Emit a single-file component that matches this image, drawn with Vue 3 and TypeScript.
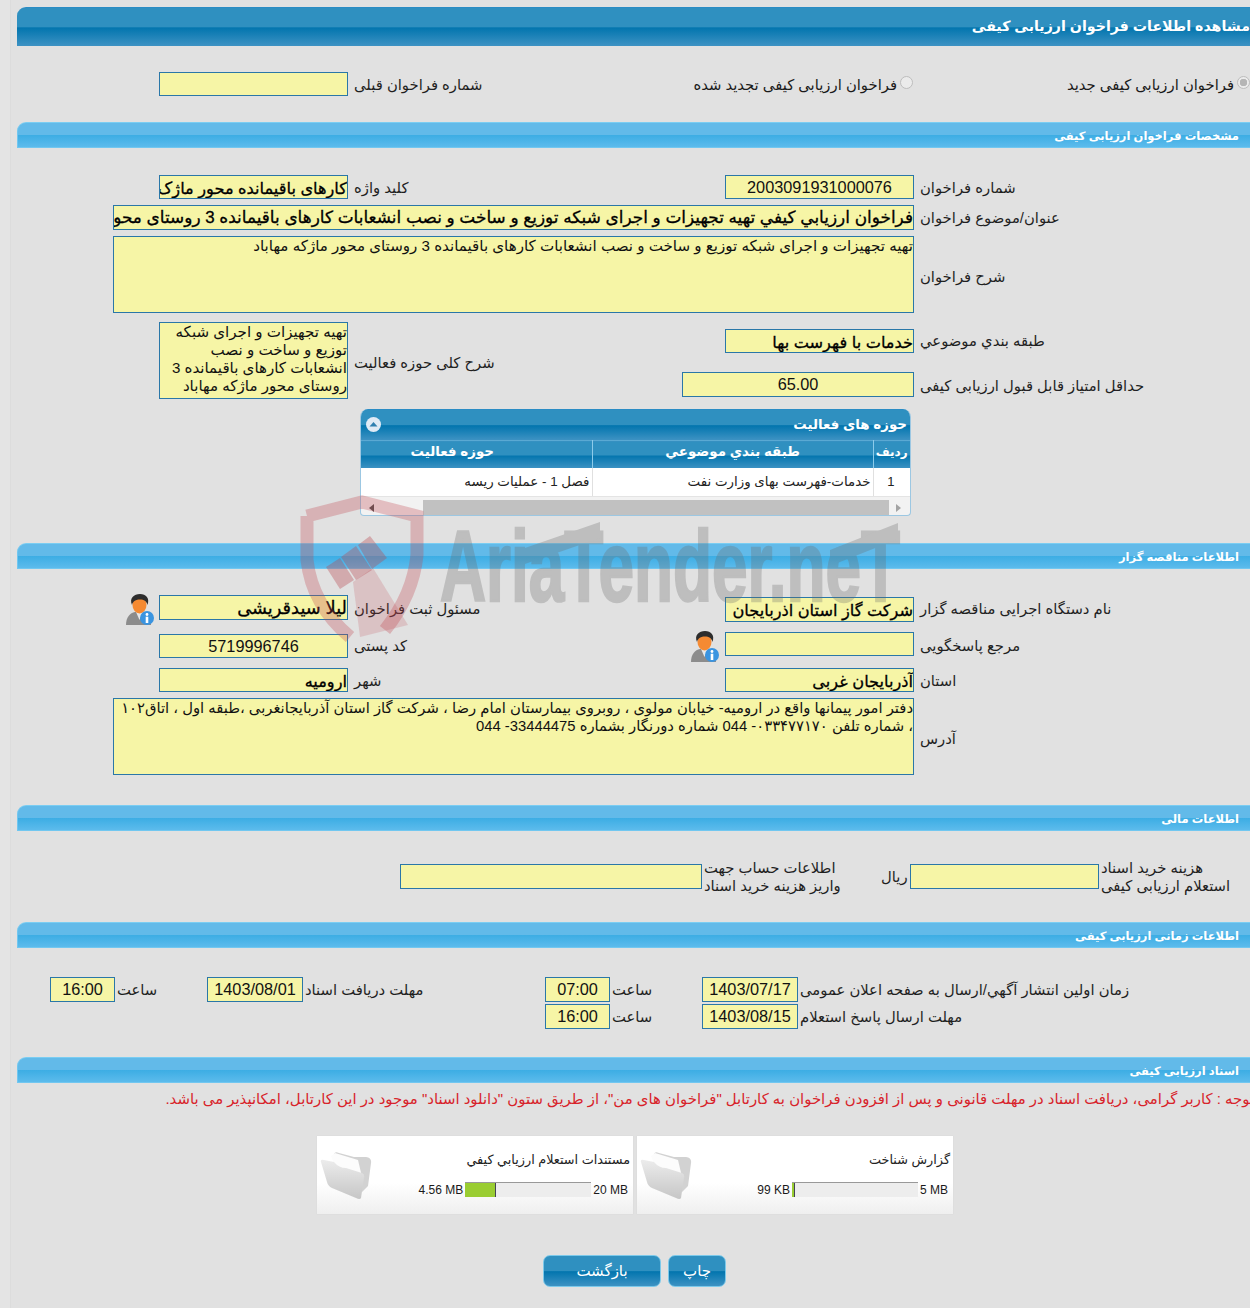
<script setup lang="ts">
interface Doc { title: string; used: string; max: string; pct: number }
const docs: Doc[] = [
  { title: 'مستندات استعلام ارزیابي کیفي', used: '4.56 MB', max: '20 MB', pct: 24 },
  { title: 'گزارش شناخت', used: '99 KB', max: '5 MB', pct: 2.5 },
]
const subject = 'فراخوان ارزيابي كيفي تهیه تجهیزات و اجرای شبکه توزیع و ساخت و نصب انشعابات کارهای باقیمانده 3 روستای محور ماژکه مهاباد'
const desc = 'تهیه تجهیزات و اجرای شبکه توزیع و ساخت و نصب انشعابات کارهای باقیمانده 3 روستای محور ماژکه مهاباد'
</script>

<template>
  <div class="viewport">
    <div class="page">
      <div class="bar bar-dark top-bar">مشاهده اطلاعات فراخوان ارزیابی کیفی</div>

      <div class="radio-row">
        <div class="field f-189 c1"></div>
        <div class="label c2">شماره فراخوان قبلی</div>
        <div class="radio-opt opt-a"><span class="radio"></span><span>فراخوان ارزیابی کیفی تجدید شده</span></div>
        <div class="radio-opt opt-b"><span class="radio on"></span><span>فراخوان ارزیابی کیفی جدید</span></div>
      </div>

      <div class="bar bar-light mt-26 h-26">مشخصات فراخوان ارزیابی کیفی</div>

      <div class="row h-24 mt-27">
        <div class="field f-189 c1 bold">کارهای باقیمانده محور ماژک</div>
        <div class="label c2">کلید واژه</div>
        <div class="field f-189 c3 num center">2003091931000076</div>
        <div class="label c4">شماره فراخوان</div>
      </div>
      <div class="row h-25 mt-6">
        <div class="field wide bold subject">{{ subject }}</div>
        <div class="label c4">عنوان/موضوع فراخوان</div>
      </div>
      <div class="row h-77 mt-6">
        <div class="field wide area">{{ desc }}</div>
        <div class="label c4">شرح فراخوان</div>
      </div>

      <div class="row split mt-9">
        <div class="field f-189 c1 span2 area">تهیه تجهیزات و اجرای شبکه<br />توزیع و ساخت و نصب<br />انشعابات کارهای باقیمانده 3<br />روستای محور ماژکه مهاباد</div>
        <div class="label c2 span2 drop">شرح کلی حوزه فعالیت</div>
        <div class="field f-189 c3 bold end">خدمات با فهرست بها</div>
        <div class="label c4 drop-more">طبقه بندي موضوعي</div>
        <div class="field f-232 c23 r2 num center start">65.00</div>
        <div class="label c4 r2">حداقل امتیاز قابل قبول ارزیابی کیفی</div>
      </div>

      <section class="panel">
        <div class="panel-head bar-dark">
          <span>حوزه های فعالیت</span>
          <svg class="collapse" width="15" height="15" viewBox="0 0 15 15">
            <circle cx="7.5" cy="7.5" r="7.5" fill="#dfeaf5" />
            <path d="M3.5 9.5 L7.5 5 L11.5 9.5 Z" fill="#2f7fb0" />
          </svg>
        </div>
        <table class="grid">
          <thead>
            <tr>
              <th class="w-38 small">ردیف</th>
              <th class="w-282">طبقه بندي موضوعي</th>
              <th class="scrolled">حوزه فعالیت</th>
            </tr>
          </thead>
          <tbody>
            <tr>
              <td class="tc">1</td>
              <td>خدمات-فهرست بهای وزارت نفت</td>
              <td>فصل 1 - عملیات ریسه</td>
            </tr>
          </tbody>
        </table>
        <div class="scroller">
          <span class="arrow arrow-r"></span>
          <span class="thumb"></span>
          <span class="arrow arrow-l"></span>
        </div>
      </section>

      <div class="bar bar-light mt-27 h-26">اطلاعات مناقصه گزار</div>

      <div class="row h-27 mt-26">
        <div class="c1 person start">
          <svg class="user" width="30" height="32" viewBox="0 0 30 32">
            <path d="M1 31c0-8 4-12 9-13h7c5 1 9 5 9 13z" fill="#8c8c8c" />
            <path d="M11 18l3.5 8 3.5-8z" fill="#e8e8e8" />
            <ellipse cx="14.5" cy="11" rx="7" ry="8.5" fill="#f58a32" />
            <path d="M7 11C4 4 9 0 15 0s10 4 7.5 11c-1-4-3.5-5.5-7.5-5.5S8 7 7 11z" fill="#2d2d2d" />
            <circle cx="22" cy="24" r="7" fill="#3a94e0" />
            <circle cx="22" cy="20.5" r="1.4" fill="#fff" />
            <rect x="20.7" y="22.7" width="2.6" height="6.3" fill="#fff" />
          </svg>
          <div class="field f-189 h-25 bold name">لیلا سیدقریشی</div>
        </div>
        <div class="label c2">مسئول ثبت فراخوان</div>
        <div class="field f-189 h-25 c3 bold end">شرکت گاز استان اذربایجان</div>
        <div class="label c4">نام دستگاه اجرایی مناقصه گزار</div>
      </div>
      <div class="row h-26 mt-10">
        <div class="field f-189 h-24 c1 num center end">5719996746</div>
        <div class="label c2 inline-user">
          <span>کد پستی</span>
          <svg class="user near" width="30" height="32" viewBox="0 0 30 32">
            <path d="M1 31c0-8 4-12 9-13h7c5 1 9 5 9 13z" fill="#8c8c8c" />
            <path d="M11 18l3.5 8 3.5-8z" fill="#e8e8e8" />
            <ellipse cx="14.5" cy="11" rx="7" ry="8.5" fill="#f58a32" />
            <path d="M7 11C4 4 9 0 15 0s10 4 7.5 11c-1-4-3.5-5.5-7.5-5.5S8 7 7 11z" fill="#2d2d2d" />
            <circle cx="22" cy="24" r="7" fill="#3a94e0" />
            <circle cx="22" cy="20.5" r="1.4" fill="#fff" />
            <rect x="20.7" y="22.7" width="2.6" height="6.3" fill="#fff" />
          </svg>
        </div>
        <div class="field f-189 h-24 c3 start"></div>
        <div class="label c4">مرجع پاسخگویی</div>
      </div>
      <div class="row h-24 mt-10">
        <div class="field f-189 c1 bold">ارومیه</div>
        <div class="label c2">شهر</div>
        <div class="field f-189 c3 bold">آذربایجان غربی</div>
        <div class="label c4">استان</div>
      </div>
      <div class="row h-77 mt-6">
        <div class="field wide area addr">دفتر امور پیمانها واقع در ارومیه- خیابان مولوی ، روبروی بیمارستان امام رضا ، شرکت گاز استان آذربایجانغربی ،طبقه اول ، اتاق۱۰۲<br />، شماره تلفن ۰۳۳۴۷۷۱۷۰- 044 شماره دورنگار بشماره 33444475- 044</div>
        <div class="label c4">آدرس</div>
      </div>

      <div class="bar bar-light mt-30 h-26">اطلاعات مالی</div>

      <div class="money">
        <div class="field"></div>
        <div class="label pad">اطلاعات حساب جهت<br />واریز هزینه خرید اسناد</div>
        <div class="label">ریال</div>
        <div class="field"></div>
        <div class="label pad">هزینه خرید اسناد<br />استعلام ارزیابی کیفی</div>
      </div>

      <div class="bar bar-light mt-33 h-26">اطلاعات زمانی ارزیابی کیفی</div>

      <div class="times mt-29">
        <div class="field num center">16:00</div>
        <div class="label pad">ساعت</div>
        <div class="field num center">1403/08/01</div>
        <div class="label pad">مهلت دریافت اسناد</div>
        <div class="field num center">07:00</div>
        <div class="label pad">ساعت</div>
        <div class="field num center">1403/07/17</div>
        <div class="label pad">زمان اولین انتشار آگهي/ارسال به صفحه اعلان عمومی</div>
      </div>
      <div class="times mt-2">
        <div class="blank"></div>
        <div class="blank"></div>
        <div class="blank"></div>
        <div class="blank"></div>
        <div class="field num center">16:00</div>
        <div class="label pad">ساعت</div>
        <div class="field num center">1403/08/15</div>
        <div class="label pad">مهلت ارسال پاسخ استعلام</div>
      </div>

      <div class="bar bar-light mt-28 h-26">اسناد ارزیابی کیفی</div>

      <p class="notice">توجه : کاربر گرامی، دریافت اسناد در مهلت قانونی و پس از افزودن فراخوان به کارتابل "فراخوان های من"، از طریق ستون "دانلود اسناد" موجود در این کارتابل، امکانپذیر می باشد.</p>

      <div class="cards">
        <article v-for="d in docs" :key="d.title" class="card">
          <svg class="folder" width="56" height="52" viewBox="0 0 56 52">
            <defs>
              <linearGradient id="fold" x1="0" y1="0" x2="0" y2="1">
                <stop offset="0" stop-color="#ececec" />
                <stop offset="1" stop-color="#c6c6c6" />
              </linearGradient>
            </defs>
            <path d="M16 6 Q17 3 21 5 L36 9 L48 9 Q54 10 53 15 L50 38 L44 44 L16 30 Z" fill="#d2d2d2" />
            <path d="M13 8 L17 5 L40 12 L45 33 L22 30 Z" fill="#fcfcfc" />
            <path d="M3 14 Q2 11 6 12 L16 14 Q21 20 28 20 L44 25 Q47 26 46 30 L43 50 Q42 52 38 50 L14 40 Q10 38 9 34 Z" fill="url(#fold)" />
          </svg>
          <div class="card-body">
            <div class="card-title">{{ d.title }}</div>
            <div class="meter-row">
              <span>{{ d.used }}</span>
              <span class="meter"><span class="meter-fill" :style="{ width: d.pct + '%' }"></span></span>
              <span>{{ d.max }}</span>
            </div>
          </div>
        </article>
      </div>

      <div class="actions">
        <button class="btn bar-dark back" type="button">بازگشت</button>
        <button class="btn bar-dark print" type="button">چاپ</button>
      </div>
    </div>

    <svg class="watermark" width="620" height="150" viewBox="0 0 620 150">
      <path d="M7 21 L62 7 L117 21 L117 60 Q113 100 85 135 M7 21 L7 65 Q12 110 50 142" fill="none" stroke="#c0474f" stroke-opacity="0.3" stroke-width="13" />
      <g fill="#b8484f" fill-opacity="0.36">
        <path d="M26 72 L40 63 L54 85 L40 94 Z" />
        <path d="M41 62 L56 51 L72 75 L56 85 Z" />
        <path d="M58 50 L70 41 L87 63 L72 74 Z" />
      </g>
      <path d="M53 87 L73 73 L108 130 L60 142 Z" fill="#c0474f" fill-opacity="0.2" />
      <g opacity="0.29" fill="#6a6a6a">
        <text x="140" y="106" class="wm-text" textLength="460" lengthAdjust="spacingAndGlyphs">AriaTender.neT</text>
        <path d="M222 54 L300 27 L300 43 L222 70 Z M530 55 L598 28 L598 44 L530 71 Z" />
      </g>
    </svg>
  </div>
</template>

<style scoped>
.viewport {
  position: relative;
  width: 1250px;
  height: 1308px;
  overflow: hidden;
  background: linear-gradient(to right, #e4e4e4 10px, #dcdcdc 10px, #dcdcdc 11px, #e1e1e1 11px);
  font-family: "Liberation Sans", "DejaVu Sans", sans-serif;
  font-size: 13px;
  color: #1a1a1a;
}
.page {
  width: 1262px;
  padding-top: 7px;
  direction: ltr;
}
.bar {
  margin-left: 17px;
  box-sizing: border-box;
  direction: rtl;
  color: #fff;
  font-weight: 700;
  border-top-left-radius: 9px;
  border-top-right-radius: 9px;
  white-space: nowrap;
  padding-right: 23px;
  display: flex;
  align-items: center;
}
.bar-dark {
  background: linear-gradient(#2f90c0 0, #2f90c0 50%, #0275ae 52%, #3d92c3 100%);
  border-top: 1px solid #2a8cc4;
}
.bar-light {
  background: linear-gradient(#62bae9 0, #62bae9 48%, #3cade4 50%, #5cbbec 100%);
  border-top: 1px solid #7acdf2;
  border-bottom: 1px solid #71c7f0;
  border-left: 1px solid #71c7f0;
  font-size: 11.5px;
  padding-top: 1px;
}
.top-bar {
  height: 39px;
  padding-right: 12px;
  padding-bottom: 2px;
  font-size: 14.2px;
}
.mt-2 { margin-top: 2px; }
.mt-6 { margin-top: 6px; }
.mt-9 { margin-top: 9px; }
.mt-10 { margin-top: 10px; }
.mt-26 { margin-top: 26px; }
.mt-27 { margin-top: 27px; }
.mt-28 { margin-top: 28px; }
.mt-29 { margin-top: 29px; }
.mt-30 { margin-top: 30px; }
.mt-33 { margin-top: 33px; }
.h-24 { height: 24px; }
.h-25 { height: 25px; }
.h-26 { height: 26px; }
.h-27 { height: 27px; }
.h-77 { height: 77px; }

.row,
.radio-row {
  display: grid;
  grid-template-columns: 348px 360px 194px 330px;
  column-gap: 6px;
}
.radio-row {
  margin-top: 26px;
  height: 24px;
  grid-template-columns: 348px 328px 225px 331px;
}
.c1 { grid-column: 1; justify-self: end; }
.c2 { grid-column: 2; }
.c3 { grid-column: 3; justify-self: end; }
.c23 { grid-column: 2 / 4; justify-self: end; }
.c4 { grid-column: 4; }
.wide { grid-column: 1 / 4; width: 801px; justify-self: end; }
.r2 { grid-row: 2; }
.span2 { grid-row: 1 / 3; }
.split {
  grid-template-rows: 31px 27px;
  row-gap: 19px;
}
.start { align-self: start; }
.end { align-self: end; }

.field {
  box-sizing: border-box;
  height: 100%;
  background: #f6f5a6;
  border: 1px solid #2a77a8;
  direction: rtl;
  text-align: right;
  font-size: 15px;
  line-height: 22px;
  white-space: nowrap;
  overflow: hidden;
  color: #111;
}
.f-189 { width: 189px; }
.f-232 { width: 232px; height: 25px; }
.h-24.field { height: 24px; }
.h-25.field { height: 25px; }
.split .end.field { height: 24px; }
.split .start.field { height: 25px; }
.bold { font-size: 16.2px; line-height: 24px; font-weight: 400; color: #000; -webkit-text-stroke: 0.3px #000; }
.subject { font-size: 16.9px; }
.name { font-size: 17.8px; }
.num { font-size: 16.3px; direction: ltr; }
.center { text-align: center; }
.area {
  white-space: normal;
  line-height: 18px;
  font-size: 15.1px;
}
.addr { font-size: 14.8px; }

.label {
  direction: rtl;
  text-align: left;
  align-self: center;
  box-sizing: border-box;
  padding-top: 1px;
  font-size: 14.8px;
  line-height: 18px;
  white-space: nowrap;
  color: #1f1f1f;
}
.pad { padding-left: 2px; }
.h-77 .label,
.label.drop { padding-top: 4px; }
.label.drop-more { padding-top: 7px; }

.radio-opt {
  display: flex;
  direction: rtl;
  align-items: center;
  gap: 3px;
  white-space: nowrap;
  font-size: 14.8px;
}
.radio {
  width: 13px;
  height: 13px;
  flex: none;
  box-sizing: border-box;
  margin-top: -4px;
  border-radius: 50%;
  border: 1px solid #bdbdbd;
  background: #ebebeb;
}
.radio.on {
  background: radial-gradient(circle, #b5b5b5 0 3.5px, #ebebeb 4px);
}
.person {
  display: flex;
  align-items: flex-start;
  gap: 3px;
  height: 25px;
}
.inline-user {
  display: flex;
  justify-content: space-between;
  align-items: center;
  direction: ltr;
  height: 26px;
}
.inline-user > span { direction: rtl; }
.user {
  flex: none;
  margin-top: -1px;
  margin-right: 1px;
  filter: blur(0.4px);
}
.user.near {
  margin-right: -6px;
  margin-top: 3px;
}

.panel {
  box-sizing: border-box;
  margin: 10px 0 0 360px;
  width: 551px;
  height: 107px;
  background: #f2f2f2;
  border: 1px solid #9cc7e2;
  border-top: none;
  border-radius: 8px 8px 4px 4px;
  overflow: hidden;
  direction: rtl;
}
.panel-head {
  height: 28px;
  display: flex;
  justify-content: space-between;
  align-items: center;
  padding: 0 3px 2px 5px;
  color: #fff;
  font-weight: 700;
  font-size: 13.4px;
}
.grid {
  width: 100%;
  border-collapse: collapse;
  table-layout: fixed;
}
.grid th {
  height: 27px;
  padding: 0 0 5px;
  box-sizing: border-box;
  font-size: 13.4px;
  font-weight: 700;
  color: #fff;
  text-align: center;
  background: linear-gradient(#2f90c0 0, #2f90c0 50%, #0275ae 52%, #3d92c3 100%);
  border-left: 1px solid #8ccbea;
  border-top: 1px solid #5aa9d3;
}
.grid th:last-child,
.grid td:last-child { border-left: none; }
.grid th.small { font-size: 12px; }
.grid th.scrolled { padding-right: 48px; }
.w-38 { width: 37px; }
.w-282 { width: 281px; }
.grid td {
  height: 29px;
  box-sizing: border-box;
  padding: 0 2px 0 0;
  background: #fff;
  font-size: 13.4px;
  border-left: 1px solid #e0e0e0;
  border-bottom: 1px solid #e4e4e4;
  color: #222;
}
.grid td.tc { text-align: center; font-size: 13px; }
.scroller {
  display: flex;
  direction: ltr;
  align-items: center;
  height: 22px;
}
.thumb {
  width: 466px;
  height: 17px;
  margin: 0 7px 0 49px;
  background: #c1c1c1;
}
.arrow {
  width: 0;
  height: 0;
  border-top: 4px solid transparent;
  border-bottom: 4px solid transparent;
}
.arrow-r {
  margin-left: 8px;
  border-right: 5px solid #505050;
}
.arrow-l {
  border-left: 5px solid #a3a3a3;
}

.money {
  display: grid;
  grid-template-columns: 302px 179px 29px 189px 1fr;
  grid-template-rows: 25px;
  margin: 33px 0 0 400px;
  height: 25px;
}

.times {
  display: grid;
  grid-template-columns: 65px 92px 96px 242px 65px 92px 96px 1fr;
  margin-left: 50px;
  height: 25px;
}

.notice {
  margin: 7px 0 0;
  padding-right: 8px;
  direction: rtl;
  height: 18px;
  line-height: 18px;
  font-size: 14.9px;
  color: #d8232a;
  white-space: nowrap;
  text-align: right;
}

.cards {
  display: flex;
  gap: 4px;
  margin: 28px 0 0 317px;
}
.card {
  box-sizing: border-box;
  width: 316px;
  height: 78px;
  display: flex;
  align-items: flex-start;
  padding: 12px 3px 0 1px;
  background: linear-gradient(#fff 0, #fff 60%, #efefef 100%);
  box-shadow: 0 0 1px #cfcfcf;
}
.folder {
  flex: none;
  filter: blur(0.5px);
}
.card-body {
  flex: 1;
  min-width: 0;
}
.card-title {
  direction: rtl;
  margin-top: 2px;
  font-size: 12.8px;
  line-height: 20px;
  color: #222;
}
.meter-row {
  display: flex;
  justify-content: flex-end;
  align-items: center;
  gap: 2px;
  margin-top: 12px;
  font-size: 12px;
  padding-right: 2px;
  white-space: nowrap;
}
.meter {
  display: block;
  box-sizing: border-box;
  width: 126px;
  height: 15px;
  background: #ededed;
  border-top: 1px solid #999;
}
.meter-fill {
  display: block;
  box-sizing: border-box;
  height: 100%;
  background: #9acd32;
  border-right: 1px solid #445;
}

.actions {
  display: flex;
  gap: 7px;
  margin: 41px 0 0 543px;
}
.btn {
  box-sizing: border-box;
  height: 32px;
  border: 1px solid #7cc9ea;
  border-radius: 7px;
  color: #fff;
  font-family: inherit;
  font-size: 15px;
  padding: 0;
}
.back { width: 118px; }
.print { width: 58px; }

.watermark {
  position: absolute;
  left: 300px;
  top: 495px;
  pointer-events: none;
}
.wm-text {
  font-family: "Liberation Sans", sans-serif;
  font-size: 100px;
  font-weight: 700;
  stroke: #6a6a6a;
  stroke-width: 2.5px;
}
</style>

<style>
html, body { margin: 0; background: #e1e1e1; }
</style>
